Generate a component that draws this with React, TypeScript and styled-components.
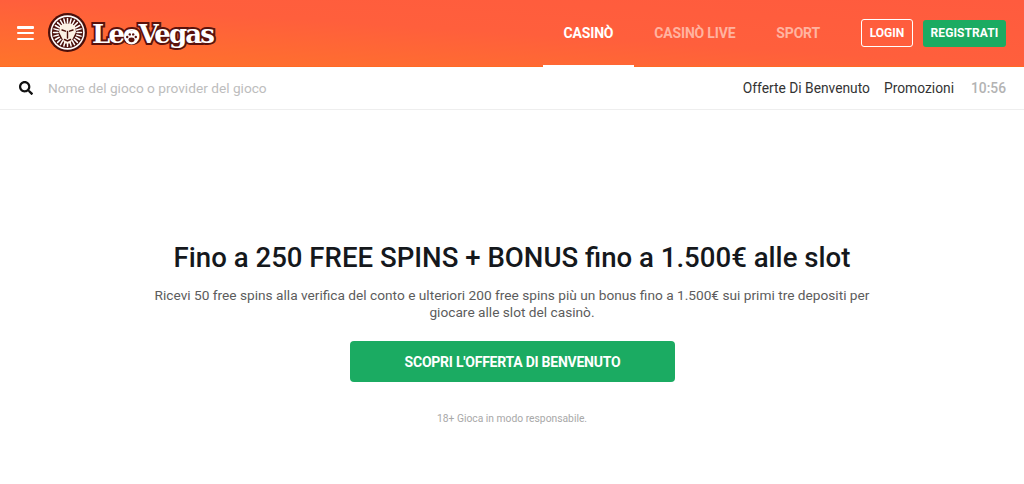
import React from "react";
import styled, { createGlobalStyle } from "styled-components";
import { FaSearch } from "react-icons/fa";

const GlobalStyle = createGlobalStyle`
  html, body {
    margin: 0;
    padding: 0;
    background: #fff;
    font-family: Roboto, "Liberation Sans", sans-serif;
  }
`;

const Header = styled.header`
  box-sizing: border-box;
  height: 67px;
  display: flex;
  align-items: stretch;
  border-bottom: 1px solid #ff6a24;
  background: linear-gradient(to top right, #ff742a 0%, #ff5f3c 50%, #ff5b3e 100%);
`;

const Burger = styled.button`
  width: 17px;
  height: 14px;
  margin: 26px 0 0 17px;
  padding: 0;
  border: 0;
  background: none;
  display: flex;
  flex-direction: column;
  justify-content: space-between;
`;

const BurgerLine = styled.span`
  display: block;
  height: 2.5px;
  border-radius: 1px;
  background: #fff;
`;

const Logo = styled.div`
  display: flex;
  align-items: center;
  margin-left: 14px;
  padding-bottom: 1px;
`;

const LogoWord = styled.span`
  position: relative;
  margin-left: 5px;
  margin-top: 2px;
  font-family: "DejaVu Serif", "Liberation Serif", serif;
  font-weight: 700;
  font-size: 26px;
  letter-spacing: -1.9px;
  color: #fff;
  paint-order: stroke fill;
  -webkit-text-stroke: 4px #5a120c;
`;

const Paw = styled.svg`
  position: absolute;
  left: 32px;
  top: 11px;
  width: 15px;
  height: 15px;
`;

const Nav = styled.nav`
  display: flex;
  margin-left: auto;
  align-items: stretch;
`;

const NavItem = styled.a<{ $active?: boolean }>`
  display: flex;
  align-items: center;
  justify-content: center;
  padding: 0 20.5px;
  margin-bottom: -1px;
  font-size: 14px;
  letter-spacing: -0.18px;
  font-weight: 700;
  color: ${({ $active }) => ($active ? "#fff" : "#ffb3a0")};
  border-bottom: 2px solid ${({ $active }) => ($active ? "#fff" : "transparent")};
`;

const Actions = styled.div`
  display: flex;
  align-items: center;
  gap: 10px;
  margin: 0 18px 0 20.5px;
`;

const LoginButton = styled.a`
  box-sizing: border-box;
  width: 52px;
  height: 28px;
  display: flex;
  align-items: center;
  justify-content: center;
  padding-bottom: 1px;
  border: 1px solid #fff;
  border-radius: 3px;
  color: #fff;
  font-size: 12px;
  font-weight: 700;
`;

const RegisterButton = styled.a`
  width: 83px;
  height: 27px;
  display: flex;
  align-items: center;
  justify-content: center;
  border-radius: 3px;
  background: #1bab62;
  color: #fff;
  font-size: 12px;
  letter-spacing: 0.1px;
  font-weight: 700;
`;

const SearchBar = styled.div`
  box-sizing: border-box;
  height: 43px;
  display: flex;
  align-items: center;
  padding: 0 18px 1px 19px;
  border-bottom: 1px solid #eeeeee;
`;

const SearchText = styled.span`
  margin-left: 15px;
  font-size: 13.7px;
  color: #bdbdbd;
`;

const SearchLinks = styled.div`
  display: flex;
  margin-left: auto;
  font-size: 13.8px;
  color: #333;
`;

const SearchLink = styled.a`
  margin-right: 14px;
`;

const Clock = styled.span`
  margin-left: 3px;
  font-weight: 500;
  color: #b3b3b3;
`;

const Hero = styled.main`
  display: flex;
  flex-direction: column;
  align-items: center;
  padding-top: 131px;
  text-align: center;
`;

const Title = styled.h1`
  margin: 0;
  font-size: 27.6px;
  line-height: 34px;
  font-weight: 500;
  color: #15181c;
`;

const Lead = styled.p`
  width: 730px;
  margin: 12px 0 0;
  font-size: 13.7px;
  line-height: 17px;
  color: #5c5c5c;
`;

const Cta = styled.a`
  width: 325px;
  height: 41px;
  margin: 20px 0 0 1px;
  display: flex;
  align-items: center;
  justify-content: center;
  border-radius: 4px;
  background: #1bab62;
  color: #fff;
  font-size: 14px;
  letter-spacing: -0.24px;
  font-weight: 700;
`;

const Note = styled.p`
  margin: 31px 0 0;
  font-size: 10.3px;
  line-height: 12px;
  color: #a8a8a8;
`;

const SPOKES = Array.from({ length: 24 }, (_, i) => (i * 360) / 24);

const LionMark = () => (
  <svg width="39" height="39" viewBox="0 0 39 39">
    <circle cx="19.5" cy="19.5" r="19.5" fill="#4a0f0a" />
    <circle cx="19.5" cy="19.5" r="17.2" fill="#fff" />
    <circle cx="19.5" cy="19.5" r="15.6" fill="#4a0f0a" />
    <g stroke="#fff" strokeWidth="1.5" strokeLinecap="round">
      {SPOKES.map((deg) => (
        <line key={deg} x1="19.5" y1="5.5" x2="19.5" y2="10" transform={`rotate(${deg} 19.5 19.5)`} />
      ))}
    </g>
    <path d="M12 13l4-2.500h7l4 2.500 1 6-3 6-2.500 5.500h-6l-2.500-5.500-3-6z" fill="#fbf1e4" />
    <path
      d="M14 17l3.500 1.200M25 17l-3.500 1.200M19.500 18.500v6.500M16.500 26.500l3 1.500 3-1.500"
      stroke="#4a0f0a"
      strokeWidth="1.400"
      fill="none"
      strokeLinecap="round"
    />
  </svg>
);

export default function App() {
  return (
    <>
      <GlobalStyle />
      <Header>
        <Burger aria-label="Menu">
          <BurgerLine />
          <BurgerLine />
          <BurgerLine />
        </Burger>
        <Logo>
          <LionMark />
          <LogoWord>
            LeoVegas
            <Paw viewBox="0 0 15 15">
              <circle cx="7.500" cy="7.500" r="7" fill="#fff" />
              <ellipse cx="7.500" cy="9.800" rx="3" ry="2.400" fill="#5a120c" />
              <circle cx="3.200" cy="7" r="1.200" fill="#5a120c" />
              <circle cx="5.800" cy="4.400" r="1.200" fill="#5a120c" />
              <circle cx="9.200" cy="4.400" r="1.200" fill="#5a120c" />
              <circle cx="11.800" cy="7" r="1.200" fill="#5a120c" />
            </Paw>
          </LogoWord>
        </Logo>
        <Nav>
          <NavItem $active>CASINÒ</NavItem>
          <NavItem>CASINÒ LIVE</NavItem>
          <NavItem>SPORT</NavItem>
        </Nav>
        <Actions>
          <LoginButton>LOGIN</LoginButton>
          <RegisterButton>REGISTRATI</RegisterButton>
        </Actions>
      </Header>
      <SearchBar>
        <FaSearch size={14} color="#111" />
        <SearchText>Nome del gioco o provider del gioco</SearchText>
        <SearchLinks>
          <SearchLink>Offerte Di Benvenuto</SearchLink>
          <SearchLink>Promozioni</SearchLink>
          <Clock>10:56</Clock>
        </SearchLinks>
      </SearchBar>
      <Hero>
        <Title>Fino a 250 FREE SPINS + BONUS fino a 1.500€ alle slot</Title>
        <Lead>
          Ricevi 50 free spins alla verifica del conto e ulteriori 200 free spins più un bonus fino a 1.500€ sui primi tre depositi per giocare alle slot del casinò.
        </Lead>
        <Cta>SCOPRI L'OFFERTA DI BENVENUTO</Cta>
        <Note>18+ Gioca in modo responsabile.</Note>
      </Hero>
    </>
  );
}
